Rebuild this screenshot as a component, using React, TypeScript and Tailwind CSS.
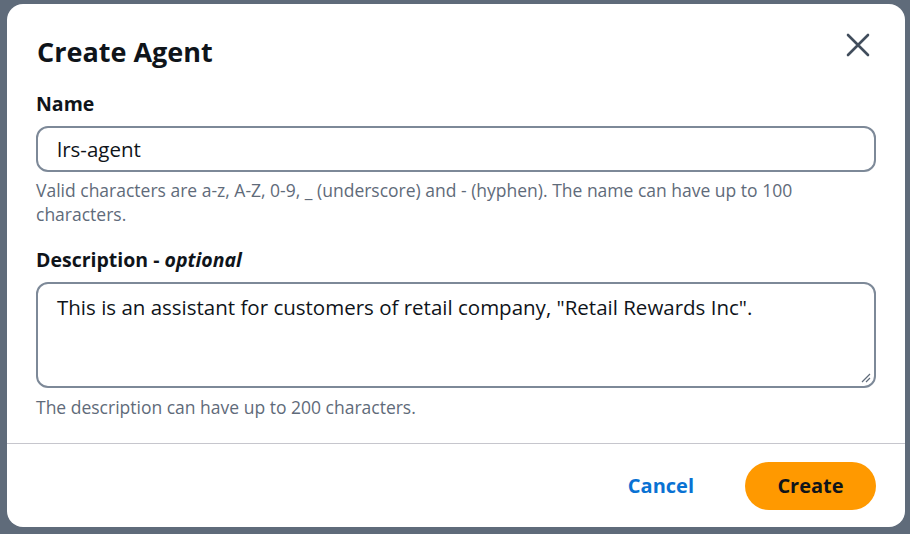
import React from "react";

export default function App() {
  return (
    <div
      className="w-[910px] h-[534px] bg-[#5f6b7a] pt-[4px] pl-[7px] overflow-hidden"
      style={{ fontFamily: '"Open Sans", "Noto Sans", sans-serif' }}
    >
      <div className="w-[898px] h-[523px] bg-white rounded-[16px] flex flex-col">
        <div className="flex items-start justify-between pl-[30px] pr-[31px] pt-[32px]">
          <h1 className="text-[27px] leading-[32px] font-bold text-[#0f141a]">Create Agent</h1>
          <button className="mt-[-7px] w-[32px] h-[32px] flex items-center justify-center text-[#414d5c]">
            <svg width="24" height="24" viewBox="0 0 24 24" fill="none" stroke="currentColor" strokeWidth="2.6" strokeLinecap="round">
              <path d="M2 2 L22 22 M22 2 L2 22" />
            </svg>
          </button>
        </div>
        <div className="px-[29px] pt-[24px] flex flex-col">
          <label className="text-[19.5px] leading-[24px] font-bold text-[#0f141a]">Name</label>
          <div className="mt-[10px] w-[840px] h-[46px] border-2 border-[#7d8998] rounded-[12px] flex items-center pl-[19px] text-[20.5px] text-[#0f141a]">
            lrs-agent
          </div>
          <p className="mt-[6px] text-[17.5px] leading-[24px] text-[#5f6b7a] w-[840px]">
            Valid characters are a-z, A-Z, 0-9, _ (underscore) and - (hyphen). The name can have up to 100 characters.
          </p>
          <label className="mt-[22px] text-[19.5px] leading-[24px] font-bold text-[#0f141a]">
            Description - <i className="italic">optional</i>
          </label>
          <div className="relative mt-[10px] w-[840px] h-[106px] border-2 border-[#7d8998] rounded-[12px] pl-[19px] pt-[9px] text-[20.5px] leading-[28px] text-[#0f141a]">
            This is an assistant for customers of retail company, "Retail Rewards Inc".
            <svg className="absolute right-[3px] bottom-[3px]" width="10" height="10" viewBox="0 0 10 10" stroke="#5f6b7a" strokeWidth="1.2">
              <path d="M9 1 L1 9 M9 5 L5 9" />
            </svg>
          </div>
          <p className="mt-[7px] text-[17.5px] leading-[24px] text-[#5f6b7a]">
            The description can have up to 200 characters.
          </p>
        </div>
        <div className="mt-[24px] border-t border-[#c6c6cd]" />
        <div className="flex items-center justify-end gap-[51px] pr-[29px] pt-[18px]">
          <button className="text-[20px] font-bold text-[#0972d3]">Cancel</button>
          <button className="w-[131px] h-[48px] rounded-full bg-[#ff9900] text-[20px] font-bold text-[#0f141a]">
            Create
          </button>
        </div>
      </div>
    </div>
  );
}
